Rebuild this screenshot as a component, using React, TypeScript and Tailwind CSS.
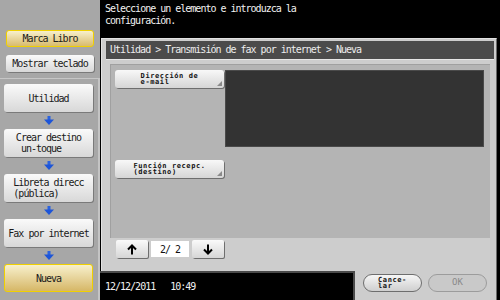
const mono = "font-['DejaVu_Sans_Mono','Liberation_Mono',monospace]";

function BlueArrow() {
  return (
    <svg width="10" height="9" viewBox="0 0 10 9">
      <rect x="3.5" y="0" width="3" height="4" fill="#2a62e0" />
      <polygon points="0,3.5 10,3.5 5,9" fill="#1d55d8" />
    </svg>
  );
}

function Corner() {
  return (
    <svg width="5" height="5" viewBox="0 0 5 5" className="absolute right-[2px] bottom-[2px]">
      <polygon points="5,0 5,5 0,5" fill="#8a8a8a" />
    </svg>
  );
}

function NavButton({ label, active }: { label: string; active?: boolean }) {
  return (
    <div
      className={
        active
          ? "h-[28px] w-[89px] rounded-[3px] border border-[#f0d000] bg-gradient-to-b from-[#f7f0cc] to-[#d6b766] flex items-center justify-center text-[#1a1a1a]"
          : "h-[28px] w-[89px] rounded-[3px] bg-gradient-to-b from-[#fafafa] to-[#d8d8d8] shadow-[1px_1px_0_#7a7a7a] flex items-center justify-center text-[#1a1a1a]"
      }
    >
      <span className="inline-block text-left whitespace-pre leading-[11px]">{label}</span>
    </div>
  );
}

function FieldButton({ label }: { label: string }) {
  return (
    <div className="relative h-[18px] w-[109px] shrink-0 rounded-[3px] bg-gradient-to-b from-[#f8f8f8] to-[#d6d6d6] shadow-[1px_1px_0_#6e6e6e] flex items-center justify-center">
      <span className="inline-block text-left whitespace-pre text-[7px] leading-[6px] tracking-[0.6px] font-bold text-[#111]">
        {label}
      </span>
      <Corner />
    </div>
  );
}

function PageButton({ up }: { up?: boolean }) {
  return (
    <div className="h-[18px] w-[32px] rounded-[2px] bg-gradient-to-b from-[#fafafa] to-[#d6d6d6] shadow-[1px_1px_0_#6e6e6e] flex items-center justify-center">
      <svg width="10" height="11" viewBox="0 0 10 11">
        {up ? (
          <path d="M5 10.5 V1.5 M1 5.5 L5 1.5 L9 5.5" stroke="#000" strokeWidth="2" fill="none" />
        ) : (
          <path d="M5 0.5 V9.5 M1 5.5 L5 9.5 L9 5.5" stroke="#000" strokeWidth="2" fill="none" />
        )}
      </svg>
    </div>
  );
}

export default function App() {
  return (
    <div className={`w-[500px] h-[300px] flex bg-black overflow-hidden text-[10px] tracking-[-1px] ${mono}`}>
      {/* columna izquierda */}
      <div className="w-[100px] h-full flex flex-col bg-[#a7a7a7]">
        <div className="h-[79px] flex flex-col items-center pt-[30px] gap-[8px] border-b border-[#c6c6c6]">
          <div className="h-[17px] w-[88px] rounded-[3px] border border-[#f0d000] bg-gradient-to-b from-[#f7f0cc] to-[#d8bb6c] flex items-center justify-center text-[#1a1a1a]">
            Marca Libro
          </div>
          <div className="h-[17px] w-[88px] rounded-[3px] bg-gradient-to-b from-[#fafafa] to-[#d8d8d8] shadow-[1px_1px_0_#7a7a7a] flex items-center justify-center text-[#1a1a1a]">
            Mostrar teclado
          </div>
        </div>
        <div className="flex-1 flex flex-col items-center pt-[5px] pr-[6px] pl-[5px] border-r-2 border-[#c4c4c4]">
          <NavButton label="Utilidad" />
          <div className="h-[17px] flex items-center"><BlueArrow /></div>
          <NavButton label={"Crear destino\n un-toque"} />
          <div className="h-[17px] flex items-center"><BlueArrow /></div>
          <NavButton label={"Libreta direcc\n(pública)"} />
          <div className="h-[17px] flex items-center"><BlueArrow /></div>
          <NavButton label="Fax por internet" />
          <div className="h-[17px] flex items-center"><BlueArrow /></div>
          <NavButton label="Nueva" active />
        </div>
      </div>

      {/* columna derecha */}
      <div className="w-[400px] h-full flex flex-col">
        <div className="h-[38px] pl-[5px] pt-[3px] text-[#f2f2f2] leading-[12px]">
          <div>Seleccione un elemento e introduzca la</div>
          <div>configuración.</div>
        </div>

        <div className="h-[233px] w-[396px] ml-[1px] bg-[#cdcdcd] border-t border-l border-[#e2e2e2] border-r border-r-[#6a6a6a] flex flex-col">
          <div className="mt-[2px] ml-[4px] w-[388px] h-[19px] bg-[#4b4b4b] border-b border-[#e6e6e6] pl-[4px] leading-[18px] text-[#ededed]">
            Utilidad &gt; Transmisión de fax por internet &gt; Nueva
          </div>
          <div className="mt-[4px] ml-[8px] w-[380px] h-[174px] bg-[#b4b4b4] border-t border-l border-[#a0a0a0] pl-[4px] pt-[5px]">
            <div className="flex items-start">
              <FieldButton label={"Dirección de\ne-mail"} />
              <div className="ml-[1px] w-[259px] h-[77px] bg-[#333333] border border-[#4a4a4a]" />
            </div>
            <div className="mt-[13px]">
              <FieldButton label={"Función recepc.\n(destino)"} />
            </div>
          </div>
          <div className="mt-[2px] ml-[14px] flex items-center gap-[3px]">
            <PageButton up />
            <div className="h-[16px] w-[38px] bg-white flex items-center justify-center text-[#111] whitespace-pre">
              2/ 2
            </div>
            <PageButton />
          </div>
        </div>

        <div className="flex-1 flex">
          <div className="w-[255px] border-t-2 border-r-2 border-[#4a4a4a] pl-[5px] pt-[8px] text-[#f2f2f2] whitespace-pre leading-[12px]">
            12/12/2011   10:49
          </div>
          <div className="w-[142px] bg-[#cdcdcd] border-r border-[#6a6a6a] flex items-start pt-[3px] pl-[8px] gap-[6px]">
            <div className="h-[18px] w-[59px] rounded-full border border-[#6e6e6e] bg-gradient-to-b from-[#f6f6f6] to-[#cfcfcf] flex items-center justify-center">
              <span className="inline-block text-left whitespace-pre text-[7px] leading-[6px] tracking-[0.6px] font-bold text-[#111]">
                {"Cance-\nlar"}
              </span>
            </div>
            <div className="h-[18px] w-[59px] rounded-full border border-[#9c9c9c] bg-[#c9c9c9] flex items-center justify-center text-[#8a8a8a] tracking-normal text-[9px]">
              OK
            </div>
          </div>
        </div>
      </div>
    </div>
  );
}
